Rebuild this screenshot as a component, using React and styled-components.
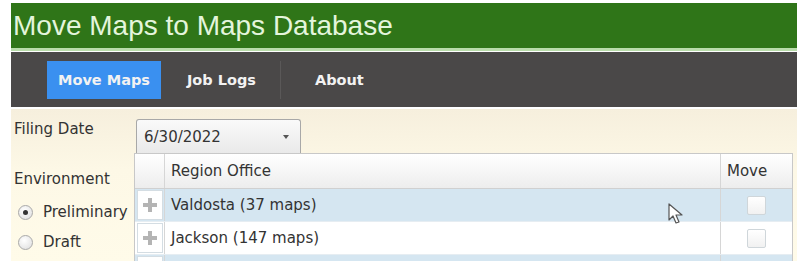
import React from 'react';
import styled, { createGlobalStyle } from 'styled-components';

const GlobalStyle = createGlobalStyle`
  html, body {
    margin: 0;
    padding: 0;
    background: #ffffff;
    overflow: hidden;
  }
  body {
    font-family: "DejaVu Sans", Verdana, sans-serif;
  }
`;

const Page = styled.div`
  width: 800px;
  height: 261px;
  padding: 3px 3px 0 11px;
  box-sizing: border-box;
  display: flex;
  flex-direction: column;
`;

const TitleBar = styled.div`
  height: 45px;
  flex-shrink: 0;
  background: #2f7518;
  border-bottom: 3px solid #b9dcab;
  display: flex;
  align-items: center;
  padding-left: 2px;
`;

const Title = styled.h1`
  margin: 0;
  font-family: "Liberation Sans", Arial, sans-serif;
  font-weight: normal;
  font-size: 28px;
  color: #e4f5dc;
`;

const NavBar = styled.div`
  height: 55px;
  flex-shrink: 0;
  margin-top: 1px;
  background: #4a4848;
  display: flex;
  align-items: center;
  padding-left: 36px;
`;

const NavItem = styled.div`
  height: 38px;
  display: flex;
  align-items: center;
  padding: 0 ${p => p.$pad || 12}px 0 ${p => p.$padL || p.$pad || 12}px;
  font-size: 14.5px;
  font-weight: bold;
  color: #f2f2f2;
  background: ${p => (p.$active ? '#3a90f0' : 'transparent')};
  border-right: ${p => (p.$sep ? '1px solid #5a5858' : 'none')};
`;

const Body = styled.div`
  flex: 1;
  display: flex;
  background: linear-gradient(#f6efdd, #fdf8e6 40%, #fffbe9);
  padding-top: 10px;
  margin-top: 2px;
  overflow: hidden;
`;

const Side = styled.div`
  width: 123px;
  flex-shrink: 0;
  box-sizing: border-box;
  padding-left: 3px;
  display: flex;
  flex-direction: column;
  font-size: 15px;
  color: #333;
`;

const Label = styled.div`
  height: 20px;
  line-height: 20px;
  margin-top: ${p => p.$top || 0}px;
  margin-bottom: ${p => p.$bottom || 0}px;
`;

const RadioRow = styled.label`
  display: flex;
  align-items: center;
  gap: 10px;
  height: 30px;
  flex-shrink: 0;
  padding-left: 4px;
  font-size: 15px;
  color: #333;
`;

const RadioDot = styled.span`
  width: 15px;
  height: 15px;
  box-sizing: border-box;
  border-radius: 50%;
  border: 1px solid #a9a9a9;
  background: radial-gradient(circle at 40% 35%, #ffffff, #dcdcdc);
  display: flex;
  align-items: center;
  justify-content: center;
  &::after {
    content: '';
    width: 5px;
    height: 5px;
    border-radius: 50%;
    background: ${p => (p.$on ? '#333' : 'transparent')};
  }
`;

const Main = styled.div`
  flex: 1;
  display: flex;
  flex-direction: column;
`;

const Select = styled.div`
  width: 165px;
  height: 34px;
  flex-shrink: 0;
  margin-left: 2px;
  box-sizing: border-box;
  border: 1px solid #a8a8a8;
  border-bottom: none;
  border-radius: 3px 3px 0 0;
  background: linear-gradient(#fafafa, #e9e9e9);
  display: flex;
  align-items: center;
  justify-content: space-between;
  padding: 0 11px 0 7px;
  font-size: 15px;
  color: #333;
`;

const Caret = styled.span`
  width: 0;
  height: 0;
  border-left: 3.5px solid transparent;
  border-right: 3.5px solid transparent;
  border-top: 4px solid #555;
`;

const Grid = styled.div`
  width: 659px;
  flex-shrink: 0;
  border: 1px solid #c8c8c8;
  border-bottom: none;
  background: #fff;
  box-sizing: border-box;
`;

const Row = styled.div`
  display: grid;
  grid-template-columns: 30px 1fr 71px;
  height: ${p => p.$h || 33}px;
  background: ${p => p.$bg || '#fff'};
  border-bottom: 1px solid #e6edf2;
  box-sizing: border-box;
`;

const HeaderRow = styled(Row)`
  background: linear-gradient(#ffffff, #ededed);
  border-bottom: 1px solid #d0d0d0;
`;

const Cell = styled.div`
  display: flex;
  align-items: center;
  justify-content: ${p => (p.$center ? 'center' : 'flex-start')};
  padding-left: ${p => (p.$center ? 0 : 6)}px;
  font-size: 15px;
  color: #333;
  border-right: ${p => (p.$sep ? '1px solid #d6d6d6' : 'none')};
  position: relative;
`;

const Expander = styled.span`
  width: 26px;
  height: 30px;
  margin-left: -4px;
  box-sizing: border-box;
  background: #fff;
  border: 1px solid #d4dde3;
  display: flex;
  align-items: center;
  justify-content: center;
`;

const Check = styled.span`
  width: 19px;
  height: 19px;
  box-sizing: border-box;
  border: 1px solid #cfd6da;
  border-radius: 2px;
  background: linear-gradient(#ffffff, #f1f1f1);
`;

const Pointer = styled.svg`
  position: absolute;
  left: 503px;
  top: 14px;
`;

function Plus() {
  return (
    <svg width="14" height="14" viewBox="0 0 14 14">
      <rect x="5" y="0" width="4" height="14" fill="#b4b4b4" />
      <rect x="0" y="5" width="14" height="4" fill="#b4b4b4" />
    </svg>
  );
}

const rows = [
  { name: 'Valdosta (37 maps)', bg: '#d5e6f1' },
  { name: 'Jackson (147 maps)', bg: '#ffffff' },
  { name: '', bg: '#d5e6f1' }
];

export default function App() {
  return (
    <>
      <GlobalStyle />
      <Page>
        <TitleBar>
          <Title>Move Maps to Maps Database</Title>
        </TitleBar>
        <NavBar>
          <NavItem $active $pad={11}>Move Maps</NavItem>
          <NavItem $sep $pad={24} $padL={26}>Job Logs</NavItem>
          <NavItem $pad={32} $padL={34}>About</NavItem>
        </NavBar>
        <Body>
          <Side>
            <Label>Filing Date</Label>
            <Label $top={30} $bottom={8}>Environment</Label>
            <RadioRow>
              <RadioDot $on />
              Preliminary
            </RadioRow>
            <RadioRow>
              <RadioDot />
              Draft
            </RadioRow>
            <RadioRow>
              <RadioDot />
            </RadioRow>
          </Side>
          <Main>
            <Select>
              6/30/2022
              <Caret />
            </Select>
            <Grid>
              <HeaderRow $h={35}>
                <Cell $sep />
                <Cell $sep>Region Office</Cell>
                <Cell>Move</Cell>
              </HeaderRow>
              {rows.map((r, i) => (
                <Row key={i} $bg={r.bg}>
                  <Cell $sep>
                    <Expander>
                      <Plus />
                    </Expander>
                  </Cell>
                  <Cell $sep>
                    {r.name}
                    {i === 0 && (
                      <Pointer width="16" height="22" viewBox="0 0 16 22">
                        <path
                          d="M1 1 L1 17 L5 13 L8 20 L11 19 L8 12 L14 12 Z"
                          fill="#fff"
                          stroke="#555"
                          strokeWidth="1.2"
                          strokeLinejoin="round"
                        />
                      </Pointer>
                    )}
                  </Cell>
                  <Cell $center>
                    <Check />
                  </Cell>
                </Row>
              ))}
            </Grid>
          </Main>
        </Body>
      </Page>
    </>
  );
}
